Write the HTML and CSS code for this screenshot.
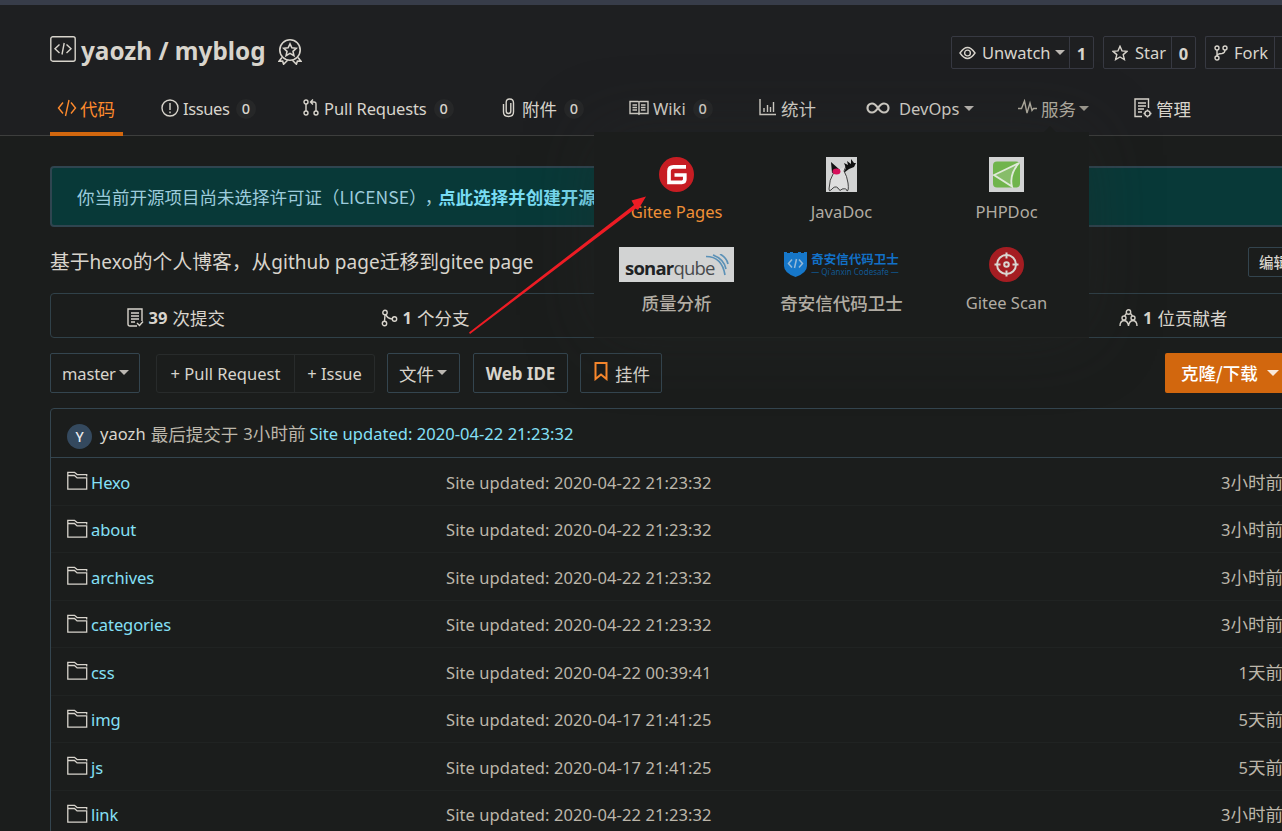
FILE: index.html
```html
<!DOCTYPE html>
<html lang="zh-CN">
<head>
<meta charset="utf-8">
<title>yaozh / myblog</title>
<link rel="stylesheet" href="styles.css">
</head>
<body>
<svg class="defs" width="0" height="0">
  <symbol id="folder" viewBox="0 0 21 20"><path d="M.8 4V1.300h6.700l2.600 2.300h9.600v2M.8 4.500h6.700l2.600 2.400h9.600v11.300H.8z" fill="none" stroke="currentColor" stroke-width="1.300"/></symbol>
</svg>
<header class="header">
  <div class="title-row">
    <svg class="repo-icon" width="26" height="26" viewBox="0 0 26 26"><rect x=".8" y=".8" width="24.4" height="24.4" rx="2"/><path d="M9.500 8.500L5 12.700l4.500 4.200M16.500 8.500l4.500 4.200-4.500 4.200M14.200 7l-2.200 11.500"/></svg>
    <h1 class="title">yaozh / myblog</h1>
    <svg class="medal" width="24" height="26" viewBox="0 0 24 26"><circle cx="12" cy="11" r="10.200"/><path d="M12 4.800l1.900 4 4.300.5-3.200 3 .9 4.300-3.900-2.200-3.900 2.200.9-4.300-3.200-3 4.300-.5zM4 18.500l-3 3.700 3.600-.1 1 3.100 4-4M20 18.500l3 3.700-3.600-.1-1 3.100-4-4"/></svg>
    <div class="social">
      <div class="social-btn"><span class="social-main watch"><svg width="17" height="14" viewBox="0 0 17 14"><path d="M1 7q7.500-11 15 0-7.500 11-15 0z"/><circle cx="8.500" cy="7" r="2.900"/></svg>Unwatch<i class="caret"></i></span><b>1</b></div>
      <div class="social-btn"><span class="social-main star"><svg width="16" height="16" viewBox="0 0 16 16"><path d="M8 1.300l2 4.600 5 .5-3.800 3.200 1.200 5L8 12l-4.400 2.600 1.200-5L1 6.400l5-.5z"/></svg>Star</span><b>0</b></div>
      <div class="social-btn"><span class="social-main fork"><svg width="14" height="16" viewBox="0 0 14 16"><circle cx="3" cy="3" r="2"/><circle cx="3" cy="13" r="2"/><circle cx="11" cy="3" r="2"/><path d="M3 5v6M11 5q0 3-3 3.500-5 0-5 3"/></svg>Fork</span></div>
    </div>
  </div>
  <nav class="tabs">
    <a class="tab active"><svg width="20" height="18" viewBox="0 0 20 18"><path d="M6 3.500L1.500 9 6 14.500M14 3.500L18.500 9 14 14.500M12 1L8.500 17"/></svg><span class="zh g3">代码</span></a>
    <a class="tab"><svg width="18" height="18" viewBox="0 0 18 18"><circle cx="9" cy="9" r="8"/><path d="M9 4v7M9 12.500v1.800"/></svg><span class="g4 issues">Issues</span><em>0</em></a>
    <a class="tab"><svg width="16" height="17" viewBox="0 0 16 17"><circle cx="3" cy="3" r="2"/><circle cx="3" cy="14" r="2"/><circle cx="13" cy="14" r="2"/><path d="M3 5v7M13 12V5q0-2-2-2H8M10 .5L7.500 3 10 5.500"/></svg><span class="g5 pr">Pull Requests</span><em>0</em></a>
    <a class="tab"><svg width="13" height="20" viewBox="0 0 13 20"><path d="M1.500 6v8q0 4.500 5 4.500t5-4.500V5q0-4-3.800-4T4.200 5v8q0 2.500 2.300 2.500T8.800 13V5"/></svg><span class="zh g7">附件</span><em>0</em></a>
    <a class="tab"><svg width="20" height="16" viewBox="0 0 20 16"><path d="M1 1.500h8l1 .8 1-.8h8v12h-8l-1 .8-1-.8H1zM10 2v12M3.500 5H8M3.500 7.500H8M3.500 10H8M12 5h4.500M12 7.500h4.500M12 10h4.500"/></svg><span class="g4">Wiki</span><em>0</em></a>
    <a class="tab"><svg width="17" height="17" viewBox="0 0 17 17"><path d="M1 0v15.500h16M5 9v4M8.500 6v7M11.500 8v5M14.500 3v10"/></svg><span class="zh g5">统计</span></a>
    <a class="tab"><svg class="infinity" width="24" height="14" viewBox="0 0 24 14"><path d="M12 7Q9 2.500 6 2.500a4.500 4.500 0 0 0 0 9Q9 11.500 12 7t6-4.500a4.500 4.500 0 0 1 0 9Q15 11.500 12 7z"/></svg><span class="g9">DevOps</span><i class="caret devops"></i></a>
    <a class="tab dim"><svg width="19" height="17" viewBox="0 0 19 17"><path d="M0 9.500h3.500L6.500 2l2.500 12L12 4l2 7.500 1.500-2H19"/></svg><span class="zh g4">服务</span><i class="caret"></i></a>
    <a class="tab"><svg width="18" height="20" viewBox="0 0 18 20"><path d="M8 18.500H1V1h13.500v9M4 5h8M4 8h8M4 11h6M4 14h4"/><circle cx="13.500" cy="15.500" r="2.600"/><path d="M13.500 11.500v1.500M13.500 18v1.500M9.500 15.500H11M16 15.500h1.500"/></svg><span class="zh g4">管理</span></a>
  </nav>
  <section class="dropdown">
    <div class="service hot"><svg width="35" height="35" viewBox="0 0 35 35"><circle cx="17.500" cy="17.500" r="17.500" fill="#c71d23"/><path d="M27 9.800H14.500q-4.500 0-4.500 4.500v11h12.800q3 0 3-3v-4.300H15.500" fill="none" stroke="#fff" stroke-width="3.700"/></svg><span>Gitee Pages</span></div>
    <div class="service"><svg width="31" height="35" viewBox="0 0 31 35"><path fill="#d2d3d3" d="M0 0h31v35H0z"/><path d="M8 15q-5 8-5 17 0 3 2 1 4-5 7-2 2 4 4 1 5-1 5 2 2 0 1-8-1-7-4-12l2-5" fill="#dedede" stroke="#191919" stroke-width=".8"/><path d="M5 5l9 8-8 3z" fill="#111"/><path d="M18 15l2-4-2-5 4 2-1-4 4 3V2l3 4 2 0-2 4-5 2-4 3z" fill="#111"/><ellipse cx="10.500" cy="14.500" rx="4" ry="3" fill="#d7105b"/></svg><span>JavaDoc</span></div>
    <div class="service"><svg width="35" height="35" viewBox="0 0 35 35"><path fill="#d2d3d3" d="M0 0h35v35H0z"/><rect x="4" y="4.500" width="27" height="26" rx="4" fill="#70b44c"/><path d="M30 6L5 18l18 11.500q-3-12 7-23.500z" fill="#87bd6a" stroke="#e0ead9" stroke-width="1.800"/></svg><span>PHPDoc</span></div>
    <div class="service"><div class="sonar"><b>sonar</b>qube<svg width="26" height="24" viewBox="0 0 26 24"><path d="M2 2.500q16 0 19 18.500M9 1q11 4 13 14M16 0q7 4 8 10" /></svg></div><span class="zh">质量分析</span></div>
    <div class="service"><div class="codesafe"><svg width="23" height="26" viewBox="0 0 23 26"><path d="M0 1h3v1h3V1h3v1h5V1h3v1h3V1h3v14q0 7-11.500 11Q0 22 0 15z" fill="#1677c9"/><path d="M8 8.500l-3.500 4L8 16.500M15 8.500l3.500 4-3.500 4M12.500 8l-2 9" fill="none" stroke="#95b9d8" stroke-width="1.500"/></svg><div><strong>奇安信代码卫士</strong><small>— Qi'anxin Codesafe —</small></div></div><span class="zh">奇安信代码卫士</span></div>
    <div class="service"><svg width="35" height="35" viewBox="0 0 35 35"><circle cx="17.500" cy="17.500" r="17.500" fill="#a51d22"/><g fill="none" stroke="#dad6d1" stroke-width="2"><circle cx="17.500" cy="17.500" r="9.500"/><circle cx="17.500" cy="17.500" r="2.300"/><path d="M17.500 5.500v6M17.500 23.500v6M5.500 17.500h6M23.500 17.500h6"/></g></svg><span>Gitee Scan</span></div>
  </section>
</header>
<main class="main">
  <div class="alert">你当前开源项目尚未选择许可证（LICENSE）<span class="comma">，</span><b>点此选择并创建开源许可</b></div>
  <div class="desc"><p><span>基于</span>hexo<span>的个人博客，从</span>github page<span>迁移到</span>gitee page</p><button class="edit">编辑</button></div>
  <div class="stats">
    <div><svg width="17" height="19" viewBox="0 0 17 19"><path d="M10 18H3q-2 0-2-2V1h14v12M4 5h8M4 8h8M4 11h8M4 14h4M10 15l2.500 2.500L16 13.500"/></svg><b>39</b><span class="zh">次提交</span></div>
    <div><svg width="17" height="18" viewBox="0 0 17 18"><circle cx="4" cy="3.500" r="2.200"/><circle cx="3.500" cy="14.500" r="2.200"/><circle cx="13.500" cy="10" r="2.200"/><path d="M4 6l-.5 6M5 5.500q1 4 6.300 4.500"/></svg><b>1</b><span class="zh">个分支</span></div>
    <div></div><div></div>
    <div><svg width="19" height="18" viewBox="0 0 19 18"><circle cx="9.500" cy="3" r="2.200"/><circle cx="5" cy="9" r="2"/><circle cx="14" cy="9" r="2"/><path d="M7.500 4.500L5.500 7M11.500 4.500l2 2.500M1 17q0-5 4-5.500 4 .5 4.500 5.500M9.500 17q.5-5 4.500-5.500 4 .5 4 5.500"/></svg><b>1</b><span class="zh">位贡献者</span></div>
  </div>
  <div class="actions">
    <button class="btn master">master<i class="caret"></i></button>
    <div class="group"><button class="pull">+ Pull Request</button><button class="issue">+ Issue</button></div>
    <button class="btn file"><span class="zh">文件</span><i class="caret"></i></button>
    <button class="btn ide">Web IDE</button>
    <button class="btn widget"><svg width="14" height="19" viewBox="0 0 14 19"><path d="M1.500 1h11v16L7 12.500 1.500 17z"/></svg><span class="zh">挂件</span></button>
    <button class="clone"><span class="zh">克隆/下载</span><i class="caret"></i></button>
  </div>
  <div class="files">
    <div class="commit"><span class="avatar">Y</span><span class="who">yaozh</span><span class="zh muted">最后提交于</span><span class="muted ago">3<span class="zh">小时前</span></span><a>Site updated: 2020-04-22 21:23:32</a></div>
    <div class="row"><svg><use href="#folder"/></svg><a>Hexo</a><span>Site updated: 2020-04-22 21:23:32</span><time>3<span class="zh">小时前</span></time></div>
    <div class="row"><svg><use href="#folder"/></svg><a>about</a><span>Site updated: 2020-04-22 21:23:32</span><time>3<span class="zh">小时前</span></time></div>
    <div class="row"><svg><use href="#folder"/></svg><a>archives</a><span>Site updated: 2020-04-22 21:23:32</span><time>3<span class="zh">小时前</span></time></div>
    <div class="row"><svg><use href="#folder"/></svg><a>categories</a><span>Site updated: 2020-04-22 21:23:32</span><time>3<span class="zh">小时前</span></time></div>
    <div class="row"><svg><use href="#folder"/></svg><a>css</a><span>Site updated: 2020-04-22 00:39:41</span><time>1<span class="zh">天前</span></time></div>
    <div class="row"><svg><use href="#folder"/></svg><a>img</a><span>Site updated: 2020-04-17 21:41:25</span><time>5<span class="zh">天前</span></time></div>
    <div class="row"><svg><use href="#folder"/></svg><a>js</a><span>Site updated: 2020-04-17 21:41:25</span><time>5<span class="zh">天前</span></time></div>
    <div class="row"><svg><use href="#folder"/></svg><a>link</a><span>Site updated: 2020-04-22 21:23:32</span><time>3<span class="zh">小时前</span></time></div>
  </div>
</main>
<svg class="pointer" width="180" height="140" viewBox="0 0 180 140"><path d="M1 136.500L166 9l-2.500-4.500L178 .5l-8 13.500-2.500-1.500L2 138z" fill="#ed1c24"/></svg>
</body>
</html>
```
FILE: styles.css
```css
* { box-sizing: border-box; }
html, body { height: 831px; overflow: hidden; }
body {
  margin: 0;
  width: 1282px;
  position: relative;
  background: #1b1d1c;
  color: #d8d4cc;
  font: 16.5px/24px "Noto Sans", "Noto Sans CJK SC", sans-serif;
}
svg { flex: none; fill: none; stroke: currentColor; stroke-width: 1.4; }
.dropdown svg { stroke: none; }
button { font: inherit; color: inherit; background: none; border: 0; padding: 0; }
.defs { position: absolute; }
.zh { font-family: "Noto Sans CJK SC", sans-serif; font-size: 17.5px; }
.caret { flex: none; width: 0; height: 0; border: 5px solid transparent; border-top-color: currentColor; border-bottom: 0; opacity: .85; }

.header { position: relative; height: 136px; background: #1e1f21; border-top: 5px solid #373c49; border-bottom: 1px solid #3d3e3d; }
.title-row { display: flex; height: 76px; padding: 31px 0 0 50px; }
.repo-icon { margin-right: 5px; }
.title { margin: 0; width: 185px; white-space: nowrap; font-size: 24.3px; line-height: 30px; font-weight: 700; }
.medal { margin: 3px 0 0 12px; stroke-width: 1.6; }
.social { display: flex; gap: 9px; margin-left: auto; }
.social-btn { display: flex; height: 33px; border: 1px solid #373942; border-radius: 2px; line-height: 33px; }
.social-main { display: flex; align-items: center; }
.watch { width: 117px; padding-left: 7px; gap: 6px; }
.watch .caret { margin-left: -2px; }
.star { width: 67px; padding-left: 8px; gap: 7px; }
.fork { width: 69px; padding-left: 8px; gap: 6px; border-right: 1px solid #373942; }
.social-btn:last-child { width: 77px; border-right: 0; border-radius: 2px 0 0 2px; }
.social-btn b { width: 24px; text-align: center; border-left: 1px solid #373942; }

.tabs { display: grid; grid-template-columns: 104px 142px 199px 127px 130px 107px 152px 116px 90px; padding-left: 50px; height: 55px; margin-top: 2px; }
.tab { display: flex; align-items: center; height: 51px; padding-left: 7px; white-space: nowrap; color: #d8d4cc; }
.tab svg { margin-top: -2px; }
.tab em { width: 20px; height: 20px; margin: 1px 0 0 7px; border-radius: 10px; background: #262728; font: 500 14.5px/19px "Noto Sans"; text-align: center; }
.tab .caret { margin-left: 3px; }
.tab .devops { margin-left: 5px; }
.tab.active { width: 73px; height: 53px; color: #fe8a2d; border-bottom: 4px solid #d2670e; padding-top: 2px; }
.tab.dim { color: #b5b0a3; }
.issues { width: 46px; letter-spacing: -.4px; }
.pr { letter-spacing: -.1px; }
.infinity { stroke-width: 2.2; }
.g3 { margin-left: 3px; }
.g4 { margin-left: 4px; }
.g5 { margin-left: 5px; }
.g7 { margin-left: 7px; }
.g9 { margin-left: 9px; }

.dropdown {
  position: absolute; z-index: 2; left: 594px; top: 127px; width: 495px; height: 206px;
  display: grid; grid-template-columns: repeat(3, 165px); grid-auto-rows: 90px; padding-top: 25px;
  background: #1b1d1c; color: #b1aca3; border-bottom: 1px solid #222423; box-shadow: 0 0 70px rgba(40, 42, 43, .35);
}
.dropdown::before { content: ""; position: absolute; left: 450px; top: -6px; border: 6px solid transparent; border-top: 0; border-bottom-color: #1b1d1c; }
.service { display: flex; flex-direction: column; align-items: center; gap: 8px; }
.service .zh { font-weight: 500; }
.service:nth-child(n+4) { gap: 9px; }
.hot { color: #ef9037; }
.sonar { position: relative; width: 115px; height: 35px; padding: 9px 0 0 6px; background: #d2d3d3; color: #484a4c; font: 18.5px/24px "Open Sans"; letter-spacing: -.8px; }
.sonar b { color: #202224; }
.sonar svg { position: absolute; right: 4px; top: 7px; stroke: #5b91b7; stroke-width: 1.7; }
.codesafe { display: flex; gap: 4px; height: 35px; padding-top: 4px; color: #1270c6; }
.codesafe strong, .codesafe small { display: block; white-space: nowrap; }
.codesafe strong { font: 700 12.5px/16px "Noto Sans CJK SC"; }
.codesafe small { font: 8px/10px "Noto Sans"; color: #105892; }

.main { width: 1299px; padding: 30px 0 0 50px; }
.alert { height: 61px; border: 2px solid #2f4550; border-radius: 4px; background: #083938; color: #9cccdc; padding-left: 25px; font: 17.5px/57px "Noto Sans CJK SC"; white-space: nowrap; }
.alert b { color: #78dcf3; }
.comma { margin: 0 -4px 0 7px; }
.desc { display: flex; align-items: center; height: 66px; padding-top: 3px; }
.desc p { margin: 0; font-size: 19px; white-space: nowrap; }
.desc p span { font-family: "Noto Sans CJK SC"; font-size: 19.8px; }
.edit { margin-left: auto; width: 51px; height: 30px; margin-top: 1px; border: 1px solid #33444e; border-radius: 2px; font: 500 14.5px/28px "Noto Sans CJK SC"; }
.stats { display: grid; grid-template-columns: repeat(5, 1fr); height: 45px; border: 1px solid #304149; border-radius: 4px; }
.stats div { display: flex; align-items: center; justify-content: center; gap: 5px; padding-top: 4px; }
.actions { display: flex; height: 40px; margin-top: 15px; }
.btn { display: flex; align-items: center; height: 40px; border: 1px solid #34454f; border-radius: 2px; white-space: nowrap; padding-top: 1px; }
.btn .caret { margin: -2px 0 0 3px; }
.master { width: 90px; padding-left: 11px; letter-spacing: -.15px; }
.group { display: flex; margin: 1px 0 0 16px; height: 39px; border: 1px solid #282b2b; border-radius: 3px; }
.pull { width: 137px; }
.issue { width: 80px; border-left: 1px solid #282b2b; }
.file { width: 73px; margin-left: 12px; padding-left: 11px; }
.ide { width: 95px; margin-left: 13px; justify-content: center; font-size: 16.9px; font-weight: 700; }
.widget { width: 82px; margin-left: 12px; padding-left: 13px; gap: 7px; }
.widget svg { color: #fe8a2d; stroke-width: 2; margin-top: -4px; }
.clone { display: flex; align-items: center; gap: 9px; width: 134px; margin-left: auto; padding-left: 16px; background: #d2670e; color: #fff; border-radius: 2px; font-weight: 500; }
.clone .caret { border-width: 6px; border-bottom: 0; }
.files { margin-top: 15px; border: 1px solid #34454f; border-radius: 4px; }
.commit { display: flex; align-items: center; height: 49px; padding: 1px 0 0 16px; border-bottom: 1px solid #34454f; letter-spacing: .04px; }
.avatar { width: 25px; height: 25px; margin: 6px 8px 0 0; border-radius: 50%; background: #34495e; color: #eee; text-align: center; font: 500 14px/25px "Noto Sans"; }
.commit .who, .commit .zh { margin-right: 5px; }
.commit .ago { margin-right: 4px; }
.commit .muted .zh { margin-right: 0; }
.muted { color: #bcb6aa; }
a { color: #85e0f7; }
.row { display: grid; grid-template-columns: 24px 355px 1fr auto; align-items: center; height: 47.5px; padding: 3px 15px 0 16px; border-bottom: 1px solid #202322; }
.row svg { width: 21px; height: 20px; margin-top: -3px; }
.row > a { letter-spacing: -.08px; }
.row > span, .row time { color: #bcb6aa; white-space: nowrap; }
.row > span { letter-spacing: .09px; }
.row time { margin-top: -1px; }
.pointer { position: absolute; z-index: 3; left: 468px; top: 196px; stroke: none; }
```
